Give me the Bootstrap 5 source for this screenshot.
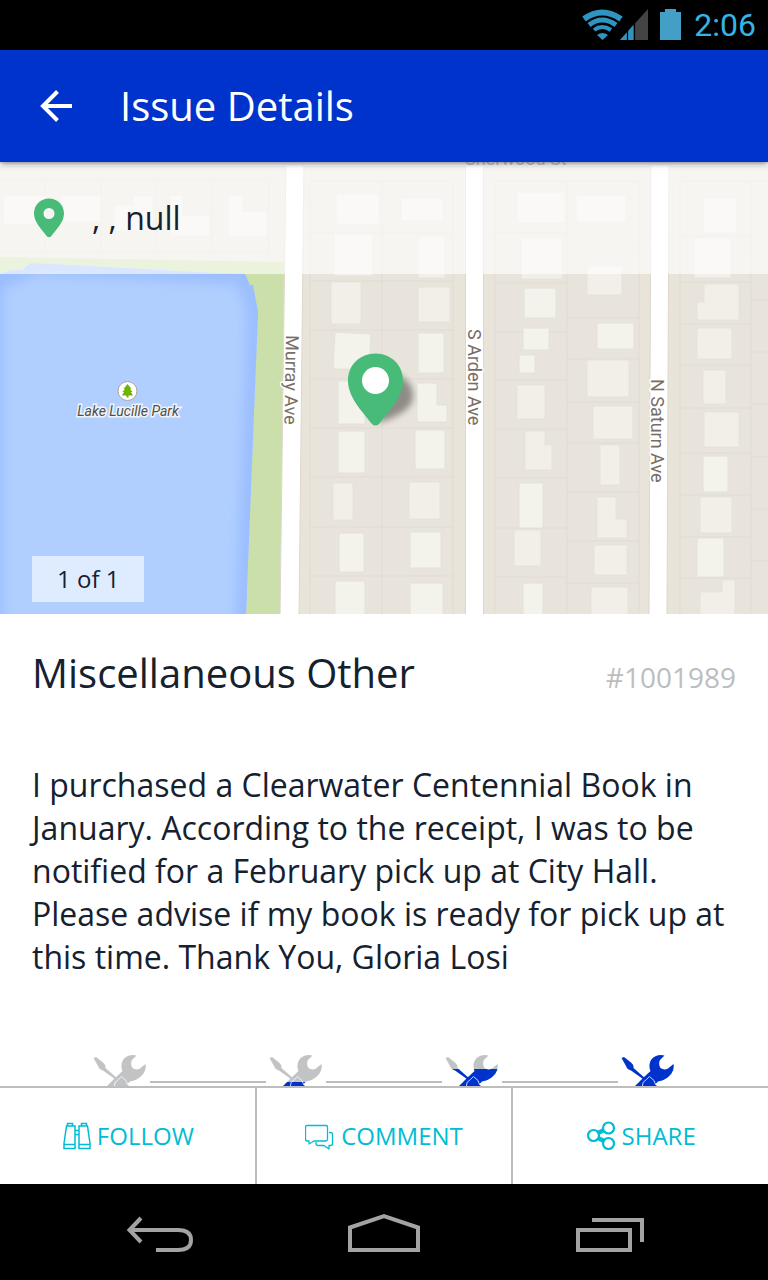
<!DOCTYPE html>
<html lang="en">
<head>
<meta charset="utf-8">
<meta name="viewport" content="width=device-width, initial-scale=1">
<title>Issue Details</title>
<link href="https://cdn.jsdelivr.net/npm/bootstrap@5.3.0/dist/css/bootstrap.min.css" rel="stylesheet">
<style>
  body { font-family: "Open Sans", "Noto Sans", sans-serif; color: #15212f; background: #fff; }
  svg { display: block; flex: none; }
  button { border: 0; background: none; padding: 0; }
  .status-bar { height: 50px; background: #000; color: #33b5e5; font: 32px/52px Roboto, sans-serif; padding-right: 12px; gap: 13px; }
  .app-bar { height: 112px; background: #0033cc; color: #fff; padding: 0 32px; gap: 40px; z-index: 2; box-shadow: 0 1px 6px rgba(0,0,0,.6); }
  .app-bar h1 { font-size: 40px; line-height: 56px; }
  .scroll-area { min-height: 0; }
  .map-canvas { width: 100%; height: auto; }
  .place-bar { height: 112px; background: rgba(255,255,255,.62); padding: 0 32px; gap: 26px; font-size: 32px; line-height: 44px; }
  .counter { left: 32px; bottom: 12px; padding: 0 25px; font-size: 24px; line-height: 46px; background: rgba(255,255,255,.6); }
  .details { padding: 31px 32px 0; }
  .details h2 { font-size: 40px; line-height: 56px; }
  .issue-no { font-size: 28px; line-height: 40px; color: #bdbdbd; }
  .description { font-size: 32px; line-height: 43px; margin: 62px 0 74px; }
  .stages { padding: 0 90px; }
  .stage-line { height: 2px; background: #bdbdbd; }
  .action-bar { border-top: 2px solid #bdbdbd; background: #fff; z-index: 1; }
  .action-bar button { height: 96px; font-size: 24px; color: #00bcd4; gap: 6px; flex: 1 1 0; }
  .action-bar button + button { border-left: 2px solid #bdbdbd; }
  .system-bar { height: 96px; background: #000; padding: 0 48px; }
  .system-bar button { width: 224px; height: 96px; }
  .road-name { font: 18px Roboto, sans-serif; fill: #776e66; stroke: #fff; stroke-width: 3px; paint-order: stroke; }
  .park-name { font: italic 14px Roboto, sans-serif; fill: #544e48; stroke: #eef4fa; stroke-width: 3px; paint-order: stroke; }
</style>
</head>
<body>
<div class="vh-100 d-flex flex-column overflow-hidden">

  <div class="status-bar d-flex align-items-center justify-content-end flex-shrink-0">
    <svg width="100" height="50" viewBox="0 0 100 50" aria-hidden="true">
      <g fill="none" stroke="#2f94bf" stroke-width="5">
        <path d="M3 19Q21 6 40 19" stroke-width="6"/>
        <path d="M8 25Q21 15 35 25"/>
        <path d="M13 30Q21 24 30 30" stroke-width="4"/>
      </g>
      <path d="M16 35Q21.500 31 27 35L21.500 40z" fill="#2f94bf"/>
      <path d="M67 9V40H39z" fill="#444"/>
      <path d="M52.500 25V40H39z" fill="#2f94bf"/>
      <path d="M46.500 30v10M53.500 22v18" stroke="#000" stroke-width="1.200"/>
      <path d="M79 12h5V9h11v3h5v28H79z" fill="#439fc5"/>
    </svg>
    <span>2:06</span>
  </div>

  <header class="app-bar d-flex align-items-center flex-shrink-0 position-relative">
    <button type="button" aria-label="Back">
      <svg width="48" height="48" viewBox="0 0 48 48" fill="none" stroke="#fff" stroke-width="4"><path d="M40 24H11M25.500 9.500L11 24l14.500 14.500"/></svg>
    </button>
    <h1 class="fw-normal m-0">Issue Details</h1>
  </header>

  <main class="scroll-area flex-grow-1 overflow-hidden">
    <section class="position-relative overflow-hidden" aria-label="Map">
      <svg class="map-canvas" viewBox="0 162 768 452">
        <defs>
          <clipPath id="lake-edge"><path d="M0 274Q7 270 22 270L31 263L214 273L245 274L250 285H253L258 312L246 614H0z"/></clipPath>
          <filter id="soft" x="-20%" y="-20%" width="140%" height="140%"><feGaussianBlur stdDeviation="6"/></filter>
          <filter id="pin-blur" x="-50%" y="-50%" width="200%" height="200%"><feGaussianBlur stdDeviation="3"/></filter>
        </defs>
        <path fill="#e8e4dc" d="M0 162h768v452H0z"/>
        <path fill="#e8e4da" d="M300 166h10v448h-10zM453 166h12v448h-12zM484 166h11v448h-11zM639 166h11v448h-11zM668 166h12v448h-12z"/>
        <path fill="#cadfaa" d="M0 257L284 262L280 614H0z"/>
        <g clip-path="url(#lake-edge)">
          <path fill="#b0cfff" d="M0 260h260v354H0z"/>
          <path fill="none" stroke="#9bbeff" stroke-width="22" filter="url(#soft)" d="M-8 630V290Q0 272 22 270L31 263L245 274L258 312L246 630"/>
        </g>
        <g fill="none" stroke="#e2ddd5" stroke-width="1.500">
          <path d="M0 180h269M0 252h269M45 180v72M101 180v72M156 180v72M212 180v72M269 180v80"/>
          <path d="M310 181v433M382 181v433M453 181v433M495 181v433M567 181v433M639 181v433M680 181v433M751 181v433"/>
          <path d="M310 181h143M310 233h143M310 281h143M310 330h143M310 379h143M310 428h143M310 477h143M310 527h143M310 576h143"/>
          <path d="M495 181h144M495 233h72M495 283h72M495 332h72M495 380h72M495 429h72M495 478h72M495 528h72M495 577h72"/>
          <path d="M567 248h72M567 318h72M567 359h72M567 402h72M567 443h72M567 492h72M567 541h72M567 583h72"/>
          <path d="M680 181h88M680 236h71M680 282h71M680 324h71M680 365h71M680 408h71M680 453h71M680 495h71M680 537h71M680 578h71"/>
          <path d="M751 248h17M751 300h17M751 352h17M751 404h17M751 457h17M751 509h17M751 561h17"/>
        </g>
        <g fill="#f2efe9" stroke="#e5e2db">
          <path d="M3 195h44v29H3zM60 195h41v27H60zM114 205h19v-9h20v35h-39zM170 195h13v20h27v21h-40zM228 195h15v16h24v26h-39z"/>
          <path d="M336 194h43v30h-43zM401 198h42v23h-42zM334 234h39v42h-39zM418 236h27v42h-27zM331 282h30v42h-30zM418 287h32v35h-32zM333 483h20v37h-20zM409 482h31v37h-31z"/>
          <path d="M517 192h48v31h-48zM576 195h50v27h-50zM521 238h41v41h-41zM587 266h35v29h-35zM587 360h42v37h-42zM517 385h28v34h-28zM593 406h40v33h-40zM525 431h20v14h7v25h-27zM600 445h20v40h-20zM597 497h19v22h11v19h-30zM514 530h27v36h-27zM594 545h33v30h-33zM591 587h37v30h-37z"/>
          <path d="M703 198h34v35h-34zM694 238h37v40h-37zM704 284h35v36h-42v-18h7zM697 328h35v31h-35zM703 370h23v34h-23zM704 412h35v35h-35zM700 497h32v36h-32zM700 592h22v-12h13v40h-35z"/>
        </g>
        <g fill="#f3f3ec" stroke="#e2e2dc">
          <path d="M335 332l36 2-2 35h-36zM418 333h26v40h-26zM338 381h27v43h-27zM417 383h20v22h10v17h-30zM338 431h27v42h-27zM415 430h30v39h-30zM339 533h25v39h-25zM410 532h31v36h-31zM335 581h30v40h-30zM410 583h33v40h-33z"/>
          <path d="M524 288h32v30h-32zM523 328h26v22h-26zM519 355h16v18h-16zM597 323h37v26h-37zM519 483h24v45h-24zM523 583h20v40h-20zM703 456h25v36h-25zM697 538h27v39h-27z"/>
        </g>
        <g fill="#fff" stroke="#ddd6cb">
          <path d="M286 158h18L299 620H280zM465.500 158h18v462h-18zM651 158h18L667 620H649z"/>
        </g>
        <path fill="#fff" d="M0 158h768v8H0z"/>
        <text class="road-name" x="465" y="165">Sherwood St</text>
        <text class="road-name" transform="translate(286 335) rotate(91)">Murray Ave</text>
        <text class="road-name" transform="translate(468 329) rotate(90)">S Arden Ave</text>
        <text class="road-name" transform="translate(651 379) rotate(90)">N Saturn Ave</text>
        <circle cx="127.500" cy="391" r="9.500" fill="#fff" stroke="#aaa497"/>
        <path fill="#73b100" d="M127.500 384l4 5h-1.500l2.500 3h-1.500l2 3.500h-4.500v2h-2v-2H122l2-3.500h-1.500l2.500-3h-1.500z"/>
        <text class="park-name" x="128" y="416" text-anchor="middle">Lake Lucille Park</text>
        <path fill="#000" opacity=".38" filter="url(#pin-blur)" d="M378 423L392 374Q414 378 413 398Q411 413 378 423z"/>
        <path fill="#49bb78" d="M375.500 353.500C360 353.500 348 365 348 380.500C348 397 361 410 372 424Q375.500 427 379 424C390 410 403 397 403 380.500C403 365 391 353.500 375.500 353.500z"/>
        <circle cx="375.500" cy="380.500" r="13.500" fill="#fff"/>
      </svg>
      <div class="place-bar position-absolute top-0 start-0 end-0 d-flex align-items-center">
        <svg width="34" height="40" viewBox="0 0 34 40" aria-hidden="true"><path fill="#49bb78" fill-rule="evenodd" d="M17 .5C8.500 .5 2 7 2 15.500C2 24 9.500 31 15 38.500Q17 40 19 38.500C24.500 31 32 24 32 15.500C32 7 25.500 .5 17 .5zM17 10a5.500 5.500 0 1 0 0 11a5.500 5.500 0 1 0 0-11z"/></svg>
        <span>, , null</span>
      </div>
      <div class="counter position-absolute">1 of 1</div>
    </section>

    <section class="details">
      <div class="d-flex justify-content-between align-items-baseline">
        <h2 class="fw-normal m-0">Miscellaneous Other</h2>
        <span class="issue-no">#1001989</span>
      </div>
      <p class="description">I purchased a Clearwater Centennial Book in January. According to the receipt, I was to be notified for a February pick up at City Hall. Please advise if my book is ready for pick up at this time. Thank You, Gloria Losi</p>
    </section>

    <svg width="0" height="0" aria-hidden="true">
      <defs>
        <linearGradient id="stage-half" gradientUnits="userSpaceOnUse" x1="0" y1="0" x2="0" y2="60"><stop offset=".5" stop-color="#c1c3c5"/><stop offset=".5" stop-color="#0033cc"/></linearGradient>
        <linearGradient id="stage-most" gradientUnits="userSpaceOnUse" x1="0" y1="0" x2="0" y2="60"><stop offset=".28" stop-color="#c1c3c5"/><stop offset=".28" stop-color="#0033cc"/></linearGradient>
        <g id="tools">
          <path d="M46.500 3.500C42 2 36 3.500 33 8C31 12 31 16 32.500 19L24 27L4 47Q2 54 9 56Q12 57 15 54L40 29.500C46 28.500 50 26 53.500 21.500Q56.500 17 55.500 12L50 16.500Q46 18.500 42.500 16Q40 12 42 8z"/>
          <path d="M3.500 6L6 5L13 10.500Q16 13 15.500 16L28 27L31.500 24.500L36 28.500L37.500 32.500L56 49Q57 56 50 56L32 38L27 35L25 31L27 28.500L13 18.500Q9 17.500 8 14z"/>
          <path d="M24.500 34L25 30.500L28.500 27.500L31.500 24.500L36 28.500L37.500 32.500L41 34" fill="none" stroke="#fff" stroke-opacity=".8"/>
        </g>
      </defs>
    </svg>
    <div class="stages d-flex align-items-center">
      <svg width="60" height="60" viewBox="0 0 60 60" fill="#c1c3c5"><use href="#tools"/></svg>
      <div class="stage-line flex-grow-1"></div>
      <svg width="60" height="60" viewBox="0 0 60 60" fill="url(#stage-half)"><use href="#tools"/></svg>
      <div class="stage-line flex-grow-1"></div>
      <svg width="60" height="60" viewBox="0 0 60 60" fill="url(#stage-most)"><use href="#tools"/></svg>
      <div class="stage-line flex-grow-1"></div>
      <svg width="60" height="60" viewBox="0 0 60 60" fill="#0033cc"><use href="#tools"/></svg>
    </div>
  </main>

  <div class="action-bar d-flex flex-shrink-0">
    <button type="button" class="d-flex align-items-center justify-content-center">
      <svg width="30" height="28" viewBox="-2 0 30 28" fill="none" stroke="#00bcd4" stroke-width="1.500" aria-hidden="true">
        <path d="M3.500 4L1 21.500V26.500H12V4zM24.500 4L27 21.500V26.500H16V4zM4.500 4V1.500h5V4M18.500 4V1.500h5V4M1 22.500h11M16 22.500h11M12 8.500h4M12 12.500h4"/>
      </svg>
      FOLLOW
    </button>
    <button type="button" class="d-flex align-items-center justify-content-center">
      <svg width="30" height="28" viewBox="1 0 30 28" fill="none" stroke="#00bcd4" stroke-width="1.300" stroke-linejoin="round" aria-hidden="true">
        <path d="M3 3.500h19q1.500 0 1.500 1.500v12q0 2-1.500 2H10L5 22v-3H3q-1.500 0-1.500-2V5q0-1.500 1.500-1.500zM25 10.500h1.500q2 0 2 2v9q0 2-2 2H25v3.500l-5-3.500h-6q-2 0-2-2V20"/>
      </svg>
      COMMENT
    </button>
    <button type="button" class="d-flex align-items-center justify-content-center">
      <svg width="30" height="30" viewBox="0 0 30 30" fill="none" stroke="#00bcd4" stroke-width="2.200" aria-hidden="true">
        <path d="M12 12L18 9M12 17L18 20" stroke-width="4.500"/>
        <circle cx="7.500" cy="14.500" r="5.500" fill="#fff"/><circle cx="22.500" cy="7" r="5.500" fill="#fff"/><circle cx="22.500" cy="22.500" r="5.500" fill="#fff"/>
      </svg>
      SHARE
    </button>
  </div>

  <nav class="system-bar d-flex justify-content-between flex-shrink-0" aria-label="System">
    <button type="button" class="d-flex align-items-center justify-content-center" aria-label="Back">
      <svg width="72" height="48" viewBox="0 0 72 48" fill="none" stroke="#a3a3a3" stroke-width="4"><path d="M17 10L5.500 22L17 34M5 22h49q13 0 13 10t-13 10H32"/></svg>
    </button>
    <button type="button" class="d-flex align-items-center justify-content-center" aria-label="Home">
      <svg width="72" height="48" viewBox="0 0 72 48" fill="none" stroke="#a3a3a3" stroke-width="4"><path d="M2 42V19.500L36 8l34 11.500V42z"/></svg>
    </button>
    <button type="button" class="d-flex align-items-center justify-content-center" aria-label="Recent apps">
      <svg width="72" height="48" viewBox="0 0 72 48" fill="none" stroke="#a3a3a3" stroke-width="4"><path d="M6 22h52v20H6zM20 12h50v22"/></svg>
    </button>
  </nav>
</div>
<script src="https://cdn.jsdelivr.net/npm/bootstrap@5.3.0/dist/js/bootstrap.bundle.min.js"></script>
</body>
</html>
